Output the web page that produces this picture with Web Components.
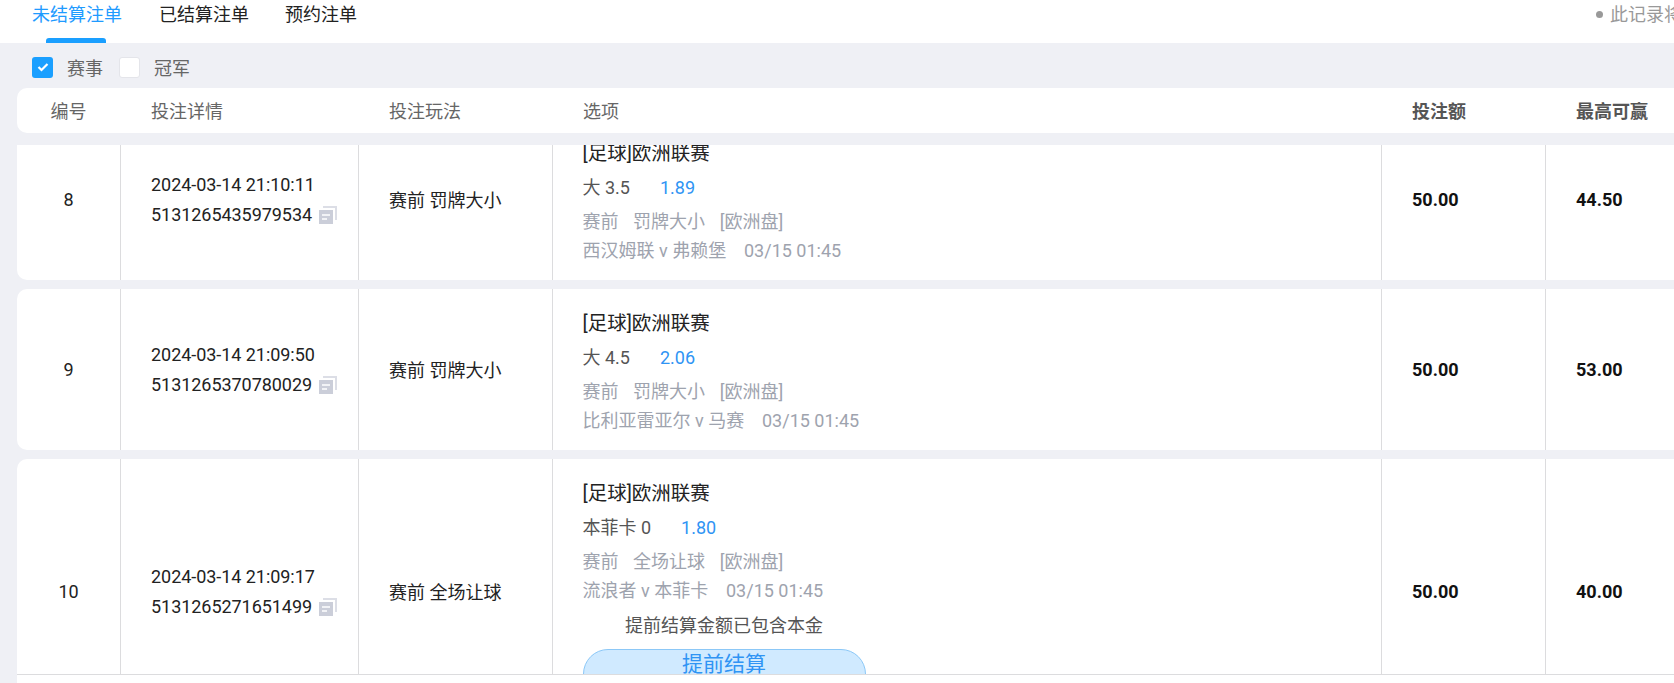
<!DOCTYPE html>
<html>
<head>
<meta charset="utf-8">
<style>
html, body { margin: 0; height: 100%; overflow: hidden; background: #fff; }
body { font-family: Roboto, "Noto Sans CJK SC", sans-serif; }
</style>
</head>
<body>
<bet-page></bet-page>
<script>
class BetTabs extends HTMLElement {
    constructor() {
        super();
        this.attachShadow({ mode: 'open' });
        this.shadowRoot.innerHTML = `
            <style>
                :host { display: flex; height: 43px; background: #fff; padding-left: 32px; gap: 38px; position: relative; font-size: 18px; color: #222; white-space: nowrap; overflow: hidden; }
                .tab { position: relative; line-height: 30px; width: 89px; }
                .tab + .tab + .tab { margin-left: -1px; }
                .active { color: #1f9bff; }
                .active::after { content: ''; position: absolute; left: 14px; width: 60px; height: 5px; top: 38px; background: #1a9fff; border-radius: 3px 3px 0 0; }
                .note { position: absolute; left: 1596px; top: 0; line-height: 30px; color: #999; }
                .note::before { content: ''; display: inline-block; width: 7px; height: 7px; border-radius: 50%; background: #999; margin-right: 7px; vertical-align: 3px; }
            </style>
            <div class="tab active">未结算注单</div>
            <div class="tab">已结算注单</div>
            <div class="tab">预约注单</div>
            <div class="note">此记录将保留</div>
        `;
    }
}

class BetCheck extends HTMLElement {
    constructor() {
        super();
        this.attachShadow({ mode: 'open' });
    }
    connectedCallback() {
        const on = this.hasAttribute('checked');
        this.shadowRoot.innerHTML = `
            <style>
                :host { display: inline-flex; align-items: center; gap: 14px; font-size: 18px; color: #666; }
                .box { box-sizing: border-box; width: 21px; height: 21px; border-radius: 3px; background: ${on ? '#1a9fff' : '#fff'}; border: ${on ? '0' : '1px solid #e4e5ea'}; display: flex; align-items: center; justify-content: center; }
            </style>
            <span class="box">${on ? '<svg width="12" height="10" viewBox="0 0 12 10"><path d="M1.5 5l3 3 6-6" fill="none" stroke="#fff" stroke-width="2.2"/></svg>' : ''}</span>
            <slot></slot>
        `;
    }
}

const COLS = '103px 238px 194px 829px 164px 1fr';

class BetHeader extends HTMLElement {
    constructor() {
        super();
        this.attachShadow({ mode: 'open' });
        this.shadowRoot.innerHTML = `
            <style>
                :host { box-sizing: border-box; display: grid; grid-template-columns: ${COLS}; height: 45px; padding-bottom: 2px; align-items: center; background: #fff; border-radius: 10px 0 0 10px; font-size: 18px; color: #666; white-space: nowrap; }
                div { padding-left: 31px; }
                .no { padding: 0; text-align: center; }
                b { color: #555; }
            </style>
            <div class="no">编号</div><div>投注详情</div><div>投注玩法</div><div>选项</div>
            <div><b>投注额</b></div><div><b>最高可赢</b></div>
        `;
    }
}

class BetRow extends HTMLElement {
    constructor() {
        super();
        this.attachShadow({ mode: 'open' });
    }
    connectedCallback() {
        const a = (n) => this.getAttribute(n);
        const early = this.hasAttribute('early');
        this.shadowRoot.innerHTML = `
            <style>
                :host { display: grid; grid-template-columns: ${COLS}; background: #fff; border-radius: 10px 0 0 10px; height: ${early ? 265 : 161}px; font-size: 18px; color: #222; margin-bottom: 9px; white-space: nowrap; }
                .cell { border-left: 1px solid #dcdcde; padding-left: 30px; display: flex; flex-direction: column; justify-content: center; }
                .no { border: 0; padding: 0; text-align: center; }
                .id { line-height: 30px; letter-spacing: -.05px; }
                .id svg { vertical-align: -3px; margin-left: 7px; }
                .play { padding-bottom: 2px; }
                .opt { justify-content: flex-start; padding: 18px 0 0 29.5px; }
                .league { font-size: 19.5px; line-height: 34px; }
                .pick { line-height: 34px; color: #555; margin-bottom: 2px; }
                .odds { color: #2f94f4; margin-left: 30px; }
                .sub { line-height: 29px; color: #9ea3ae; white-space: pre; word-spacing: .4px; }
                .match { word-spacing: 0; }
                .tip { line-height: 30px; color: #555; width: 283px; text-align: center; margin-top: 6px; }
                .btn { box-sizing: border-box; width: 283px; height: 44px; margin-top: 8px; border: 1px solid #8cc8f7; border-radius: 25px 25px 0 0; background: #d0eaff; color: #2f94f4; font-size: 21px; text-align: center; line-height: 28px; }
                .amt { font-weight: bold; color: #111; }
            </style>
            <div class="cell no">${a('no')}</div>
            <div class="cell id">
                <div>${a('time')}</div>
                <div>${a('ref')}<svg width="18" height="18" viewBox="0 0 18 18"><path d="M4 0h14v14h-2V2H4z" fill="#dcdee6"/><rect x="0" y="4" width="14" height="14" fill="#cbced9"/><path d="M3 9h8M3 13h5" stroke="#fff" stroke-width="1.6"/></svg></div>
            </div>
            <div class="cell play">${a('play')}</div>
            <div class="cell opt">
                <div class="league">[足球]欧洲联赛</div>
                <div class="pick">${a('pick')}<span class="odds">${a('odds')}</span></div>
                <div class="sub">${a('sub')}</div>
                <div class="sub match">${a('match')}</div>
                ${early ? '<div class="tip">提前结算金额已包含本金</div><div class="btn">提前结算</div>' : ''}
            </div>
            <div class="cell amt">${a('stake')}</div>
            <div class="cell amt">${a('win')}</div>
        `;
    }
}

class BetPage extends HTMLElement {
    constructor() {
        super();
        this.attachShadow({ mode: 'open' });
        this.shadowRoot.innerHTML = `
            <style>
                :host { display: flex; flex-direction: column; height: 683px; overflow: hidden; }
                .main { background: #eff0f5; flex: 1; padding-left: 17px; display: flex; flex-direction: column; min-height: 0; }
                .filters { box-sizing: border-box; height: 45px; padding: 3px 0 0 15px; display: flex; align-items: center; gap: 16px; }
                .list { box-sizing: border-box; margin-top: 12px; height: 530px; flex: none; overflow: hidden; border-bottom: 1px solid #dcdcde; }
                .rows { margin-top: -26px; }
                .foot { flex: 1; background: #fff; }
            </style>
            <bet-tabs></bet-tabs>
            <div class="main">
                <div class="filters">
                    <bet-check checked>赛事</bet-check>
                    <bet-check>冠军</bet-check>
                </div>
                <bet-header></bet-header>
                <div class="list"><div class="rows">
                    <bet-row no="8" time="2024-03-14 21:10:11" ref="5131265435979534" play="赛前 罚牌大小" pick="大 3.5" odds="1.89" sub="赛前   罚牌大小   [欧洲盘]" match="西汉姆联 v 弗赖堡    03/15 01:45" stake="50.00" win="44.50"></bet-row>
                    <bet-row no="9" time="2024-03-14 21:09:50" ref="5131265370780029" play="赛前 罚牌大小" pick="大 4.5" odds="2.06" sub="赛前   罚牌大小   [欧洲盘]" match="比利亚雷亚尔 v 马赛    03/15 01:45" stake="50.00" win="53.00"></bet-row>
                    <bet-row early no="10" time="2024-03-14 21:09:17" ref="5131265271651499" play="赛前 全场让球" pick="本菲卡 0" odds="1.80" sub="赛前   全场让球   [欧洲盘]" match="流浪者 v 本菲卡    03/15 01:45" stake="50.00" win="40.00"></bet-row>
                </div></div>
                <div class="foot"></div>
            </div>
        `;
    }
}

customElements.define('bet-tabs', BetTabs);
customElements.define('bet-check', BetCheck);
customElements.define('bet-header', BetHeader);
customElements.define('bet-row', BetRow);
customElements.define('bet-page', BetPage);
</script>
</body>
</html>
